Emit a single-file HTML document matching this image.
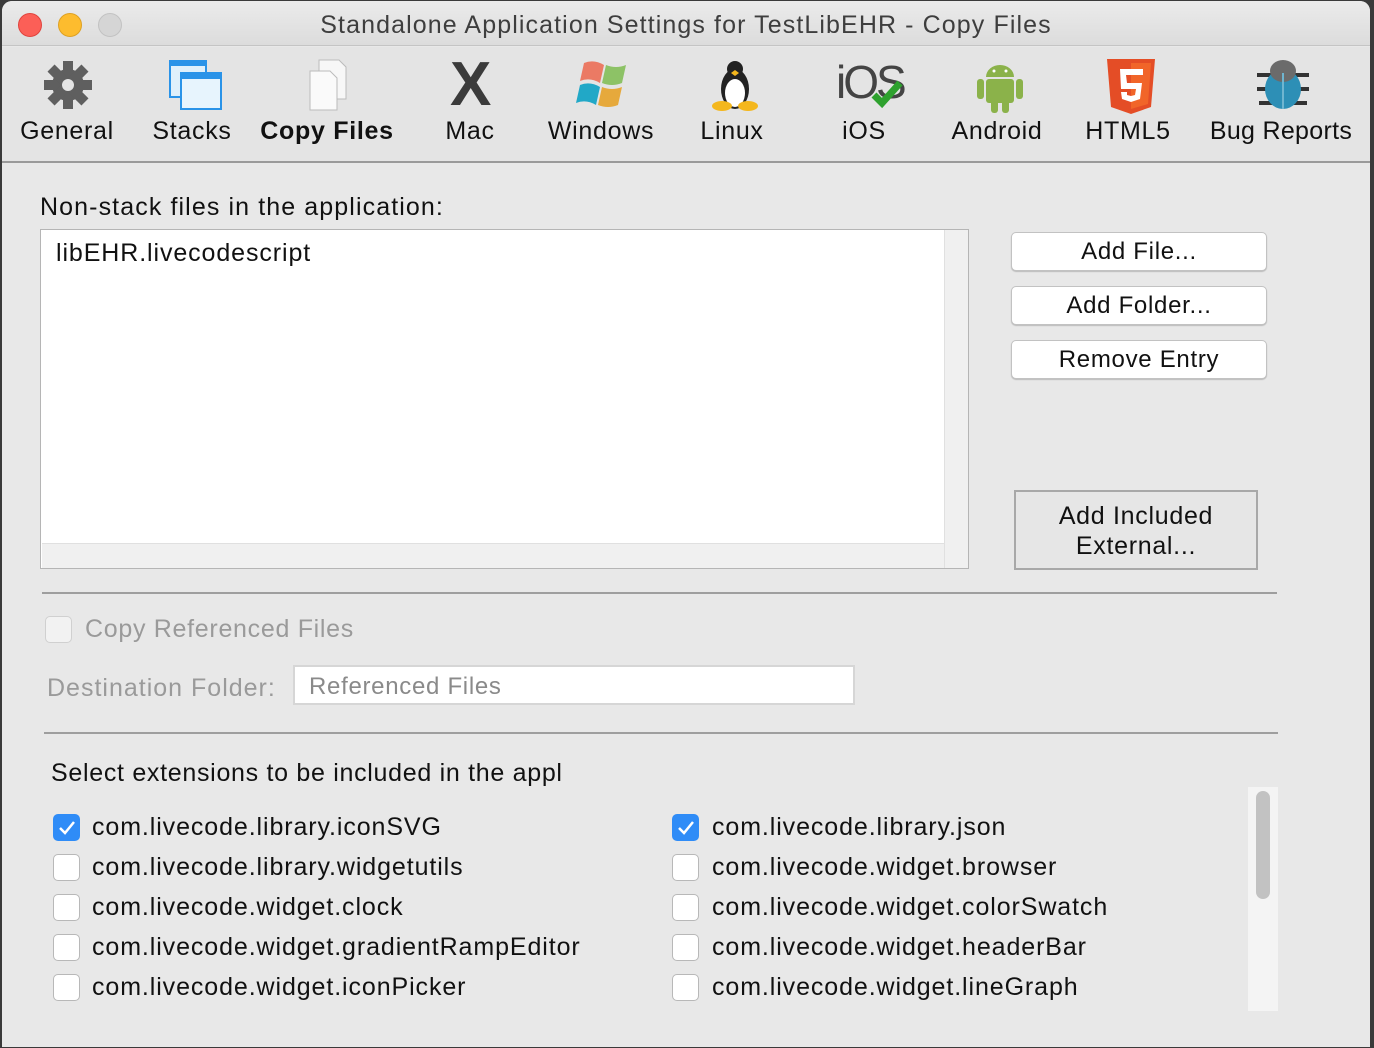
<!DOCTYPE html>
<html><head><style>
*{margin:0;padding:0;box-sizing:border-box}
body{width:1374px;height:1048px;background:#3a3a3a;font-family:"Liberation Sans",sans-serif;position:relative;overflow:hidden;letter-spacing:0.7px}
.win{position:absolute;left:2px;top:1px;width:1368px;height:1046px;background:#e8e8e8;border-radius:10px 10px 0 0;overflow:hidden}
.title{position:absolute;left:0;top:0;width:100%;height:45px;background:linear-gradient(#ebebeb,#dcdcdc);border-bottom:1px solid #c4c4c4;text-align:center;font-size:25px;line-height:48px;color:#3e3e3e;letter-spacing:1.1px}
.dot{position:absolute;top:12px;width:24px;height:24px;border-radius:50%}
.tb{position:absolute;top:46px;left:0;width:100%;height:116px;background:#e4e4e4;border-bottom:2px solid #9a9a9a}
.t{position:absolute;top:70px;font-size:25px;color:#111;transform:translateX(-50%);white-space:nowrap}
.ic{position:absolute;top:12px}
.a{position:absolute}
.lbl{font-size:25px;color:#111}
.btn{position:absolute;background:#fff;border:1px solid #c2c2c2;border-radius:5px;font-size:24px;text-align:center;color:#111;box-shadow:0 1px 1px #bbb}
.cb{position:absolute;width:27px;height:27px;border:1px solid #b8b8b8;border-radius:5px;background:#fff}
.cb.on{background:#2f8cf7;border-color:#2f8cf7}
.ext{position:absolute;font-size:25px;color:#111;white-space:nowrap;letter-spacing:0.9px}
</style></head><body>
<div class="win">
<div class="title">Standalone Application Settings for TestLibEHR - Copy Files
<div class="dot" style="left:16px;background:#fc5f57;border:1px solid #e0443e"></div>
<div class="dot" style="left:56px;background:#fdbc2e;border:1px solid #dea123"></div>
<div class="dot" style="left:96px;background:#d5d5d5;border:1px solid #c2c2c2"></div>
</div>
<div class="tb">
<svg class="ic" style="left:40px" width="52" height="52" viewBox="0 0 52 52"><g fill="#5f5f5f"><circle cx="26" cy="26" r="16"/><rect x="21" y="2" width="10" height="48"/><rect x="2" y="21" width="48" height="10"/><rect x="21" y="2" width="10" height="48" transform="rotate(45 26 26)"/><rect x="21" y="2" width="10" height="48" transform="rotate(-45 26 26)"/></g><circle cx="26" cy="26" r="6" fill="#e4e4e4"/></svg>
<svg class="ic" style="left:165px" width="58" height="52"><rect x="3" y="2" width="36" height="36" fill="#dff0fb" stroke="#2a93e8" stroke-width="2"/><rect x="3" y="2" width="36" height="5" fill="#2a93e8"/><rect x="14" y="14" width="40" height="36" fill="#e7f4fd" stroke="#2a93e8" stroke-width="2"/><rect x="14" y="14" width="40" height="6" fill="#2a93e8"/></svg>
<svg class="ic" style="left:305px" width="46" height="52"><path d="M12 1h20l7 7v32H12z" fill="#f7f7f7" stroke="#bbb"/><path d="M3 12h20l7 7v32H3z" fill="#fafafa" stroke="#bbb"/></svg>
<div class="a" style="left:448px;top:6px;font-size:62px;font-weight:bold;color:#3b3b3b;line-height:64px">X</div>
<svg class="ic" style="left:574px" width="58" height="52"><path d="M8 4q10-4 20 2l-4 18q-10-6-20-2z" fill="#eb7a64"/><path d="M30 6q10 4 20 0l-4 18q-10 4-20 0z" fill="#8dc266"/><path d="M4 26q10-4 20 2l-4 18q-10-6-20-2z" fill="#21a8c7"/><path d="M26 28q10 4 20 0l-4 18q-10 4-20 0z" fill="#e6a93c"/></svg>
<svg class="ic" style="left:708px" width="50" height="52"><ellipse cx="25" cy="30" rx="14" ry="20" fill="#222"/><ellipse cx="25" cy="34" rx="10" ry="14" fill="#fff"/><circle cx="25" cy="10" r="8" fill="#222"/><path d="M21 14l4-3 4 3-4 3z" fill="#f4b71d"/><ellipse cx="12" cy="47" rx="10" ry="5" fill="#f4b71d"/><ellipse cx="38" cy="47" rx="10" ry="5" fill="#f4b71d"/></svg>
<div class="a" style="left:834px;top:10px;font-size:46px;color:#444;letter-spacing:-3px;line-height:50px">iOS</div>
<svg class="a" style="left:868px;top:32px" width="36" height="30"><path d="M4 16l8 8 18-20" fill="none" stroke="#2ea12e" stroke-width="7"/></svg>
<svg class="ic" style="left:970px" width="56" height="56"><path d="M14 18a14 12 0 0 1 28 0z" fill="#8bb24a"/><rect x="14" y="20" width="28" height="24" rx="3" fill="#8bb24a"/><rect x="5" y="20" width="7" height="20" rx="3" fill="#8bb24a"/><rect x="44" y="20" width="7" height="20" rx="3" fill="#8bb24a"/><rect x="19" y="40" width="7" height="14" rx="3" fill="#8bb24a"/><rect x="30" y="40" width="7" height="14" rx="3" fill="#8bb24a"/><circle cx="22" cy="12" r="1.5" fill="#fff"/><circle cx="34" cy="12" r="1.5" fill="#fff"/></svg>
<svg class="ic" style="left:1104px" width="50" height="56"><path d="M1 0h48l-4 48-20 7-20-7z" fill="#e44d26"/><path d="M25 4h20l-3 41-17 5z" fill="#f16529"/><path d="M14 10h23v6H20l1 8h15l-2 16-9 3-9-3-1-7h6l0 3 4 1 4-1 1-6H15z" fill="#fff"/></svg>
<svg class="ic" style="left:1253px" width="56" height="52"><g stroke="#333" stroke-width="4"><path d="M2 16h52M2 30h52M4 44h48"/></g><ellipse cx="28" cy="30" rx="18" ry="20" fill="#2d8fb6"/><ellipse cx="28" cy="12" rx="13" ry="11" fill="#6b6b6b"/><path d="M28 14v36" stroke="#6fb5d0" stroke-width="2"/></svg>
<div class="t" style="left:65px">General</div>
<div class="t" style="left:190px">Stacks</div>
<div class="t" style="left:325px;font-weight:bold">Copy Files</div>
<div class="t" style="left:468px">Mac</div>
<div class="t" style="left:599px">Windows</div>
<div class="t" style="left:730px">Linux</div>
<div class="t" style="left:862px">iOS</div>
<div class="t" style="left:995px">Android</div>
<div class="t" style="left:1126px">HTML5</div>
<div class="t" style="left:1279px;letter-spacing:0.3px">Bug Reports</div>
</div>
<div class="a lbl" style="left:38px;top:192px;letter-spacing:1.1px">Non-stack files in the application:</div>
<div class="a" style="left:38px;top:228px;width:929px;height:340px;background:#fff;border:1px solid #b5b5b5"></div>
<div class="a" style="left:942px;top:229px;width:24px;height:338px;background:#f0f0f0;border-left:1px solid #e0e0e0"></div>
<div class="a" style="left:40px;top:542px;width:902px;height:25px;background:#f0f0f0;border-top:1px solid #e0e0e0"></div>
<div class="a lbl" style="left:54px;top:238px;letter-spacing:0.9px">libEHR.livecodescript</div>
<div class="btn" style="left:1009px;top:231px;width:256px;height:39px;line-height:38px">Add File...</div>
<div class="btn" style="left:1009px;top:285px;width:256px;height:39px;line-height:38px">Add Folder...</div>
<div class="btn" style="left:1009px;top:339px;width:256px;height:39px;line-height:38px">Remove Entry</div>
<div class="a" style="left:1012px;top:489px;width:244px;height:80px;background:#e6e6e6;border:2px solid #a8a8a8;font-size:25px;text-align:center;line-height:30px;padding-top:9px;color:#111">Add Included<br>External...</div>
<div class="a" style="left:40px;top:591px;width:1235px;height:2px;background:#9e9e9e"></div>
<div class="cb" style="left:43px;top:615px;background:#f2f2f2;border-color:#d0d0d0"></div>
<div class="a lbl" style="left:83px;top:614px;color:#9a9a9a">Copy Referenced Files</div>
<div class="a lbl" style="left:45px;top:673px;color:#9a9a9a;letter-spacing:1px">Destination Folder:</div>
<div class="a" style="left:291px;top:664px;width:562px;height:40px;background:#fff;border:2px solid #d6d6d6;font-size:24px;color:#8a8a8a;line-height:40px;padding-left:14px">Referenced Files</div>
<div class="a" style="left:42px;top:731px;width:1234px;height:2px;background:#9e9e9e"></div>
<div class="a lbl" style="left:49px;top:758px;width:512px;overflow:hidden;white-space:nowrap">Select extensions to be included in the application</div>
<div class="a" style="left:1246px;top:786px;width:30px;height:224px;background:#f4f4f4"></div>
<div class="a" style="left:1254px;top:790px;width:14px;height:108px;background:#c2c2c2;border-radius:7px"></div>
<div class="cb on" style="left:51px;top:813px"><svg width="25" height="25"><path d="M6 13l5 5 9-11" fill="none" stroke="#fff" stroke-width="2.5"/></svg></div>
<div class="cb" style="left:51px;top:853px"></div>
<div class="cb" style="left:51px;top:893px"></div>
<div class="cb" style="left:51px;top:933px"></div>
<div class="cb" style="left:51px;top:973px"></div>
<div class="cb on" style="left:670px;top:813px"><svg width="25" height="25"><path d="M6 13l5 5 9-11" fill="none" stroke="#fff" stroke-width="2.5"/></svg></div>
<div class="cb" style="left:670px;top:853px"></div>
<div class="cb" style="left:670px;top:893px"></div>
<div class="cb" style="left:670px;top:933px"></div>
<div class="cb" style="left:670px;top:973px"></div>
<div class="ext" style="left:90px;top:812px">com.livecode.library.iconSVG</div>
<div class="ext" style="left:90px;top:852px">com.livecode.library.widgetutils</div>
<div class="ext" style="left:90px;top:892px">com.livecode.widget.clock</div>
<div class="ext" style="left:90px;top:932px">com.livecode.widget.gradientRampEditor</div>
<div class="ext" style="left:90px;top:972px">com.livecode.widget.iconPicker</div>
<div class="ext" style="left:710px;top:812px">com.livecode.library.json</div>
<div class="ext" style="left:710px;top:852px">com.livecode.widget.browser</div>
<div class="ext" style="left:710px;top:892px">com.livecode.widget.colorSwatch</div>
<div class="ext" style="left:710px;top:932px">com.livecode.widget.headerBar</div>
<div class="ext" style="left:710px;top:972px">com.livecode.widget.lineGraph</div>
</div>
</body></html>
